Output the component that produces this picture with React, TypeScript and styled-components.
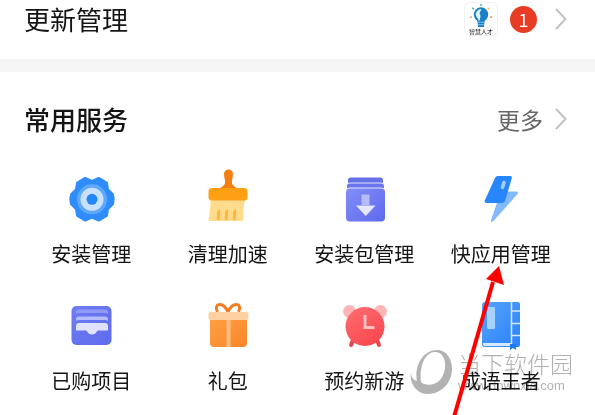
import React from "react";
import styled, { createGlobalStyle } from "styled-components";

const GlobalStyle = createGlobalStyle`
  * { box-sizing: border-box; }
  body {
    margin: 0;
    background: #fff;
    color: #141414;
    font-family: "Noto Sans CJK SC", sans-serif;
    overflow: hidden;
  }
`;

const Page = styled.main`
  position: relative;
`;

const Bar = styled.header<{ $top?: number; $bottom?: number }>`
  display: flex;
  align-items: center;
  justify-content: space-between;
  padding: ${(p) => p.$top ?? 0}px 28px ${(p) => p.$bottom ?? 0}px 24px;
`;

const Title = styled.h2<{ $strong?: boolean }>`
  margin: 0;
  font-size: 26px;
  line-height: 38px;
  font-weight: ${(p) => (p.$strong ? 500 : 400)};
`;

const LinkButton = styled.button`
  display: flex;
  align-items: center;
  gap: 12px;
  height: 38px;
  padding: 0;
  border: 0;
  background: none;
  color: #666;
  font: inherit;
  font-size: 23px;
  line-height: 38px;
`;

const AppThumb = styled.span`
  display: flex;
  flex-direction: column;
  align-items: center;
  width: 34px;
  height: 34px;
  border: 1px solid #f0f0f0;
  border-radius: 6px;
  background: #fff;
  color: #222;
  font-size: 6px;
  line-height: 6px;
`;

const Count = styled.span`
  width: 27px;
  height: 27px;
  margin-right: 6px;
  border-radius: 50%;
  background: #e93c24;
  color: #fff;
  font-size: 18px;
  line-height: 27px;
  text-align: center;
`;

const Divider = styled.div`
  height: 13px;
  background: #f6f6f6;
`;

const Grid = styled.section`
  display: grid;
  grid-template-columns: repeat(4, 1fr);
  row-gap: 30px;
  padding: 31px 26px 22px 23px;
`;

const Service = styled.button`
  display: flex;
  flex-direction: column;
  align-items: center;
  gap: 13px;
  padding: 0;
  border: 0;
  background: none;
  color: inherit;
  font: inherit;
  font-size: 20px;
  line-height: 24px;
  white-space: nowrap;
`;

const Watermark = styled.div`
  position: absolute;
  left: 409px;
  top: 349px;
  display: flex;
  gap: 5px;
  color: #b2b2b2;
  mix-blend-mode: multiply;
  pointer-events: none;
`;

const MarkText = styled.div`
  display: flex;
  flex-direction: column;
`;

const MarkName = styled.span`
  font-size: 23px;
  font-weight: 300;
  line-height: 28px;
`;

const MarkUrl = styled.span`
  font-family: "Liberation Sans", sans-serif;
  font-size: 13px;
  line-height: 18px;
`;

const Pointer = styled.svg`
  position: absolute;
  left: 445px;
  top: 260px;
  pointer-events: none;
`;

const Chevron = () => (
  <svg width="12" height="24" viewBox="0 0 12 24" fill="none" stroke="#c2c2c2" strokeWidth="2">
    <path d="M1 2l9.500 10L1 22" />
  </svg>
);

const Bulb = () => (
  <svg width="26" height="27" viewBox="0 0 26 27">
    <circle cx="13" cy="12" r="7.500" fill="#1b80c8" />
    <path d="M9 17h8l-1 8h-6z" fill="#1b80c8" />
    <path d="M7.500 12a5.500 5.500 0 0 1 6-5.500l-2 4 1 3-1 5h-1c0-3-3-4-3-6.500z" fill="#dff5ff" />
    <path d="M10 20h6M10 22.500h6" stroke="#7dbce6" />
    <g fill="none" strokeWidth="1.300">
      <path d="M13 1v2" stroke="#2fa6a0" />
      <path d="M4 5l1.500 1.500" stroke="#32a4a8" />
      <path d="M22 5l-1.500 1.500" stroke="#e6c84b" />
      <path d="M1.500 15l2-.5" stroke="#e88a54" />
      <path d="M24.500 15l-2-.5" stroke="#e0665a" />
    </g>
  </svg>
);

const Icon = ({ children }: { children: React.ReactNode }) => (
  <svg width="60" height="60" viewBox="0 0 60 60" aria-hidden="true">
    {children}
  </svg>
);

const Gear = () => (
  <Icon>
    <path
      d="M24 9.500L31 12.500L38 9.500L45.500 14L46.500 20.500L51.500 25.500Q53 30 51.500 35L46.500 40L45.500 46.500L38 51L31 48L24 51L16.500 46.500L15.500 40L10.500 35Q9 30 10.500 25.500L15.500 20.500L16.500 14Z"
      fill="#2f8dfb"
      stroke="#2f8dfb"
      strokeWidth="3"
      strokeLinejoin="round"
    />
    <circle cx="31" cy="30.300" r="15" fill="#5fa9fc" />
    <circle cx="31" cy="30.300" r="11.500" fill="#c9e1fe" />
    <circle cx="31" cy="30.300" r="5.500" fill="#2387f8" />
  </Icon>
);

const Brush = () => (
  <Icon>
    <path d="M26 5a4.500 4.500 0 0 1 9 0c0 4-1.500 6-1 9 .4 2.500 3 4 5 5v2H22v-2c2-1 4.600-2.500 5-5 .5-3-1-5-1-9z" fill="#f27d12" />
    <path d="M12.500 29H48q-3 7-2.500 20 0 3-3 3H12q-2 0-1.500-2 2-8 2-21z" fill="#ffdb8e" />
    <path d="M20 51q-1.500 0-1.300-2l.6-7q2.500-2.500 3 0l-.6 9zM28 51q-1.500 0-1.300-2l.6-7q2.500-2.500 3 0l-.6 9zM36 51q-1.500 0-1.300-2l.6-7q2.500-2.500 3 0l-.6 9z" fill="#fdb638" />
    <rect x="10.500" y="19" width="39" height="12.500" rx="3.500" fill="#fda014" />
  </Icon>
);

const Package = () => (
  <Icon>
    <defs>
      <linearGradient id="pkg" x2="1" y2="1">
        <stop stopColor="#838ff6" />
        <stop offset="1" stopColor="#5e68ee" />
      </linearGradient>
    </defs>
    <path d="M14 11q0-2.500 3-2.500h29q3 0 3 2.500v3H14z" fill="#6670e8" />
    <path d="M13 16q0-2.500 3-2.500h31q3 0 3 2.500v4H13z" fill="#dfe3ff" />
    <path d="M13 17q0-2.500 3-2.500h31q3 0 3 2.500v2H13z" fill="#6b76ec" />
    <rect x="12" y="18.500" width="39" height="33.500" rx="4" fill="#dfe3ff" />
    <rect x="12" y="19.500" width="39" height="33" rx="4" fill="url(#pkg)" />
    <path d="M27.500 25.500h8V36h-8z" fill="#b5bcfb" />
    <path d="M22 36.500h19.500L31.700 47z" fill="#e5e8ff" />
  </Icon>
);

const Bolt = () => (
  <Icon>
    <path d="M30 22.500h15.500q2.500 0 1 2.500L22.500 52q-3 2-2.500-1z" fill="#82b9ff" />
    <path d="M24 9q.7-2 3-2h12q2.500 0 1.800 2.300L34 32q-.8 2-3 2H15.500q-2.500 0-1.800-2.300z" fill="#2786fb" />
    <path d="M33 13.500l-1.500 5" stroke="#a5cdff" strokeWidth="3.500" strokeLinecap="round" />
  </Icon>
);

const Tray = () => (
  <Icon>
    <defs>
      <linearGradient id="tray" x2="1" y2="1">
        <stop stopColor="#6f7cf2" />
        <stop offset="1" stopColor="#5e6bee" />
      </linearGradient>
    </defs>
    <rect x="10.500" y="10" width="40" height="39" rx="5" fill="url(#tray)" />
    <path d="M15 18v-2q0-2.500 3-2.500h26q3 0 3 2.500v2q-1-1-3-1H18q-2 0-3 1z" fill="#909afa" />
    <path d="M15 25v-2q0-2.500 3-2.500h26q3 0 3 2.500v2q-1-1-3-1H18q-2 0-3 1z" fill="#b4bcfd" />
    <path d="M15 34.500V30q0-3 3-3h26q3 0 3 3v4.500H37c-1.500 0-1.500 4-6 4s-4.500-4-6-4z" fill="#dfe3ff" />
  </Icon>
);

const Gift = () => (
  <Icon>
    <defs>
      <linearGradient id="gift" x2="1" y2="1">
        <stop stopColor="#ffa144" />
        <stop offset="1" stopColor="#f98529" />
      </linearGradient>
    </defs>
    <path d="M30 16C25 5 15 7 19.500 16M30 16C35 5 45 7 40.500 16" fill="none" stroke="#f47c20" strokeWidth="3" />
    <path d="M12 22h37v25q0 4-4 4H16q-4 0-4-4z" fill="url(#gift)" />
    <rect x="28.500" y="22" width="4" height="29" fill="#ffbd85" />
    <rect x="10.500" y="16" width="40" height="8" rx="2" fill="#ffd0a0" />
  </Icon>
);

const Alarm = () => (
  <Icon>
    <defs>
      <linearGradient id="alarm" x2="0.700" y2="1">
        <stop stopColor="#ff6f72" />
        <stop offset="1" stopColor="#f9484f" />
      </linearGradient>
    </defs>
    <circle cx="15.500" cy="15.500" r="6.500" fill="#ffb4b5" />
    <circle cx="46.500" cy="15.500" r="6.500" fill="#ffb4b5" />
    <path d="M19 44l-2 5M43 44l2 5" stroke="#ed434a" strokeWidth="4" strokeLinecap="round" />
    <circle cx="31" cy="30.500" r="19.500" fill="url(#alarm)" />
    <path d="M31 19v12.500h9.500" fill="none" stroke="#ffc0c0" strokeWidth="3" />
  </Icon>
);

const Book = () => (
  <Icon>
    <defs>
      <linearGradient id="book" x2="1" y2="1">
        <stop stopColor="#55a4fb" />
        <stop offset="1" stopColor="#2b82fa" />
      </linearGradient>
    </defs>
    <path d="M11 9q0-3 3-3h33q2 0 2 2v41q0 2-2 2H14q-3 0-3-3z" fill="url(#book)" />
    <path d="M12 47h29v3H14q-2 0-2-3z" fill="#d7e9ff" />
    <path d="M40.500 6v45M41 15h8M41 27.500h8M41 39.500h8" stroke="#d7e9ff" strokeWidth="1.500" />
    <rect x="16" y="11" width="8" height="22" rx="1" fill="#a7d1ff" />
    <path d="M39 48h6v6l-3-2-3 2z" fill="#1a7cf0" />
  </Icon>
);

const services = [
  { label: "安装管理", Art: Gear },
  { label: "清理加速", Art: Brush },
  { label: "安装包管理", Art: Package },
  { label: "快应用管理", Art: Bolt },
  { label: "已购项目", Art: Tray },
  { label: "礼包", Art: Gift },
  { label: "预约新游", Art: Alarm },
  { label: "成语王者", Art: Book },
];

export default function App() {
  return (
    <Page>
      <GlobalStyle />
      <Bar $bottom={21}>
        <Title>更新管理</Title>
        <LinkButton aria-label="更新管理">
          <AppThumb>
            <Bulb />
            智慧人才
          </AppThumb>
          <Count>1</Count>
          <Chevron />
        </LinkButton>
      </Bar>
      <Divider />
      <Bar $top={28}>
        <Title $strong>常用服务</Title>
        <LinkButton>
          更多
          <Chevron />
        </LinkButton>
      </Bar>
      <Grid>
        {services.map(({ label, Art }) => (
          <Service key={label}>
            <Art />
            {label}
          </Service>
        ))}
      </Grid>
      <Watermark>
        <svg width="44" height="46" viewBox="0 0 44 46" aria-hidden="true">
          <path
            fillRule="evenodd"
            fill="#b2b2b2"
            d="M2 23C2 28 4 31 8 32C5 17 14 1 28 1C37 1 43 9 43 20C43 34 32 45 19 45C8 45 0 35 2 23ZM26 3C15 3 10 20 12 33C16 37 25 37 31 31C39 22 38 3 26 3Z"
          />
        </svg>
        <MarkText>
          <MarkName>当下软件园</MarkName>
          <MarkUrl>www.downxia.com</MarkUrl>
        </MarkText>
      </Watermark>
      <Pointer width="70" height="155" viewBox="0 0 70 155" aria-hidden="true">
        <path d="M9 157L48 22" stroke="#fe0000" strokeWidth="4" />
        <path d="M54 6L59 25 41 19z" fill="#fe0000" />
      </Pointer>
    </Page>
  );
}
